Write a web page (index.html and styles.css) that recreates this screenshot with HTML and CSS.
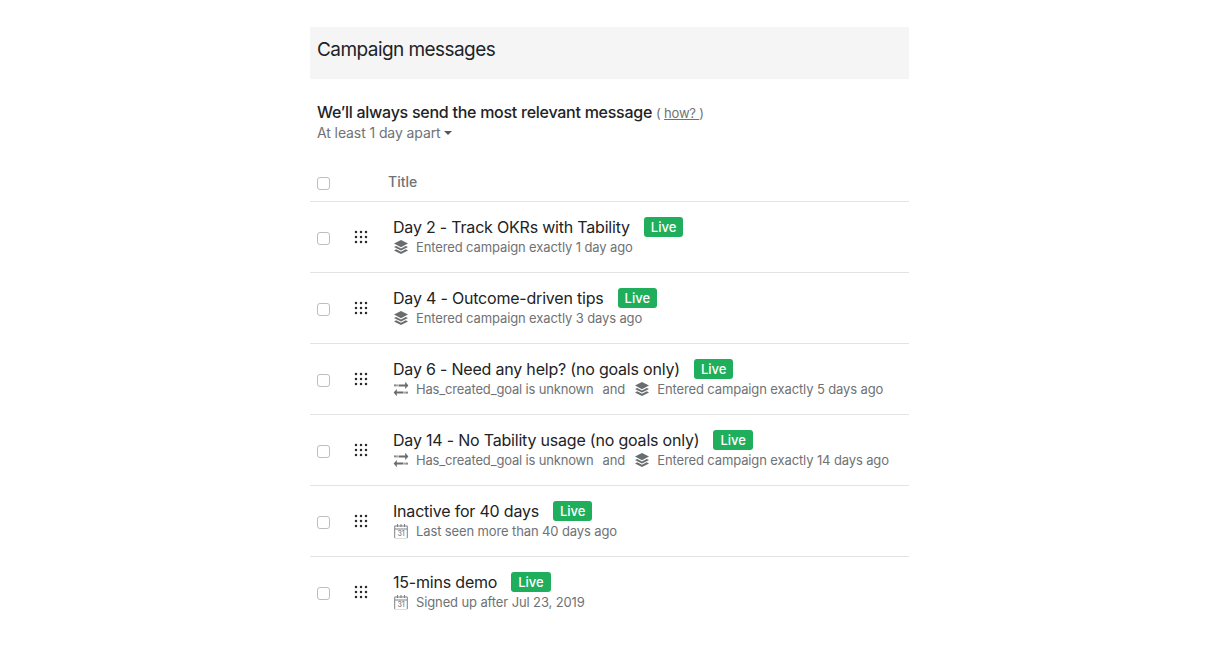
FILE: index.html
```html
<!DOCTYPE html>
<html lang="en">

<head>
      <meta charset="UTF-8">
      <title>Campaign messages</title>
      <link rel="stylesheet" href="styles.css">
</head>

<body>
      <svg class="icon-defs">
            <symbol id="icon-layers" viewBox="0 0 16 16">
                  <path d="M8 1 15 4.6 8 8.2 1 4.6Z" />
                  <path d="M3.2 6.9 1 8 8 11.6 15 8 12.8 6.9 8 9.4Z" />
                  <path d="M3.2 10.3 1 11.4 8 15 15 11.4 12.8 10.3 8 12.8Z" />
            </symbol>
            <symbol id="icon-swap" viewBox="0 0 16 16">
                  <path d="M5.5 3.4h6.7V.8L15.4 4.4 12.2 8V5.4H5.5Z" />
                  <path d="M10.5 12.6H3.8v2.6L.6 11.6 3.8 8v2.6h6.7Z" />
                  <rect x="1.2" y="3.4" width="1.6" height="2" />
                  <rect x="3.4" y="3.4" width="1.2" height="2" />
                  <rect x="13.2" y="10.6" width="1.6" height="2" />
                  <rect x="11.4" y="10.6" width="1.2" height="2" />
            </symbol>
            <symbol id="icon-calendar" viewBox="0 0 16 16">
                  <path d="M2 2.6h12a.8.8 0 0 1 .8.8v11a.8.8 0 0 1-.8.8H2a.8.8 0 0 1-.8-.8v-11a.8.8 0 0 1 .8-.8Zm.2 1v1.9h11.6V3.6Zm0 2.9v8.5h11.6V6.5Z" />
                  <rect x="4" y="1" width="1" height="3" />
                  <rect x="7.5" y="1" width="1" height="3" />
                  <rect x="11" y="1" width="1" height="3" />
            </symbol>
            <symbol id="icon-grip" viewBox="0 0 14 14">
                  <circle cx="2" cy="2" r="1.25" />
                  <circle cx="7" cy="2" r="1.25" />
                  <circle cx="12" cy="2" r="1.25" />
                  <circle cx="2" cy="7" r="1.25" />
                  <circle cx="7" cy="7" r="1.25" />
                  <circle cx="12" cy="7" r="1.25" />
                  <circle cx="2" cy="12" r="1.25" />
                  <circle cx="7" cy="12" r="1.25" />
                  <circle cx="12" cy="12" r="1.25" />
            </symbol>
      </svg>

      <div class="page">
            <div class="page-header">
                  <h1>Campaign messages</h1>
            </div>

            <div class="intro">
                  <div class="intro-title">We’ll always send the most relevant message <span class="how">( <a href="#">how? </a>)</span></div>
                  <div class="intro-sub">At least 1 day apart<span class="caret"></span></div>
            </div>

            <div class="table-head">
                  <span class="check"></span>
                  <span class="head-title">Title</span>
            </div>

            <div class="row">
                  <span class="check"></span>
                  <svg class="grip"><use href="#icon-grip" /></svg>
                  <div class="row-body">
                        <div class="row-title"><span>Day 2 - Track OKRs with Tability</span><span class="badge">Live</span></div>
                        <div class="row-sub">
                              <svg class="icon"><use href="#icon-layers" /></svg><span>Entered campaign exactly 1 day ago</span>
                        </div>
                  </div>
            </div>

            <div class="row">
                  <span class="check"></span>
                  <svg class="grip"><use href="#icon-grip" /></svg>
                  <div class="row-body">
                        <div class="row-title"><span>Day 4 - Outcome-driven tips</span><span class="badge">Live</span></div>
                        <div class="row-sub">
                              <svg class="icon"><use href="#icon-layers" /></svg><span>Entered campaign exactly 3 days ago</span>
                        </div>
                  </div>
            </div>

            <div class="row">
                  <span class="check"></span>
                  <svg class="grip"><use href="#icon-grip" /></svg>
                  <div class="row-body">
                        <div class="row-title"><span>Day 6 - Need any help? (no goals only)</span><span class="badge">Live</span></div>
                        <div class="row-sub">
                              <svg class="icon"><use href="#icon-swap" /></svg><span class="cond">Has_created_goal is unknown</span>
                              <span class="joiner">and</span>
                              <svg class="icon"><use href="#icon-layers" /></svg><span>Entered campaign exactly 5 days ago</span>
                        </div>
                  </div>
            </div>

            <div class="row">
                  <span class="check"></span>
                  <svg class="grip"><use href="#icon-grip" /></svg>
                  <div class="row-body">
                        <div class="row-title"><span>Day 14 - No Tability usage (no goals only)</span><span class="badge">Live</span></div>
                        <div class="row-sub">
                              <svg class="icon"><use href="#icon-swap" /></svg><span class="cond">Has_created_goal is unknown</span>
                              <span class="joiner">and</span>
                              <svg class="icon"><use href="#icon-layers" /></svg><span>Entered campaign exactly 14 days ago</span>
                        </div>
                  </div>
            </div>

            <div class="row">
                  <span class="check"></span>
                  <svg class="grip"><use href="#icon-grip" /></svg>
                  <div class="row-body">
                        <div class="row-title"><span>Inactive for 40 days</span><span class="badge">Live</span></div>
                        <div class="row-sub">
                              <svg class="icon icon-light" viewBox="0 0 16 16"><use href="#icon-calendar" /><text class="cal-day" x="8" y="13.4">31</text></svg><span>Last seen more than 40 days ago</span>
                        </div>
                  </div>
            </div>

            <div class="row">
                  <span class="check"></span>
                  <svg class="grip"><use href="#icon-grip" /></svg>
                  <div class="row-body">
                        <div class="row-title"><span>15-mins demo</span><span class="badge">Live</span></div>
                        <div class="row-sub">
                              <svg class="icon icon-light" viewBox="0 0 16 16"><use href="#icon-calendar" /><text class="cal-day" x="8" y="13.4">31</text></svg><span>Signed up after Jul 23, 2019</span>
                        </div>
                  </div>
            </div>
      </div>
</body>

</html>
```

FILE: styles.css
```css
* {
      padding: 0;
      margin: 0;
      box-sizing: border-box;
}

body {
      background-color: #fff;
      color: #212326;
      font-family: Inter, "Noto Sans", sans-serif;
}

.icon-defs {
      display: none;
}

.page {
      width: 599px;
      margin: 27px 0 0 310px;
}

.page-header {
      height: 52px;
      padding: 0 7px 8px;
      display: flex;
      align-items: center;
      background-color: #f5f5f5;
}

.page-header h1 {
      font-size: 19px;
      font-weight: 400;
      letter-spacing: -0.56px;
}

.intro {
      padding: 23px 7px 0;
}

.intro-title {
      font-size: 16px;
      font-weight: 500;
      line-height: 20px;
      letter-spacing: -0.26px;
}

.how {
      font-size: 13px;
      font-weight: 400;
      letter-spacing: -0.2px;
      color: #6f7275;
}

.how a {
      color: #6f7275;
}

.intro-sub {
      font-size: 14px;
      line-height: 20px;
      letter-spacing: -0.1px;
      color: #6f7275;
      display: flex;
      align-items: center;
}

.caret {
      width: 0;
      height: 0;
      margin-left: 3px;
      border-left: 4px solid transparent;
      border-right: 4px solid transparent;
      border-top: 4px solid #55585b;
}

.check {
      flex: none;
      width: 13px;
      height: 13px;
      margin-top: 2px;
      background-color: #fff;
      border: 1px solid #bcbec0;
      border-radius: 3px;
}

.table-head {
      height: 50px;
      margin-top: 9px;
      padding: 11px 0 0 7px;
      display: flex;
      align-items: center;
      border-bottom: 1px solid #e3e3e3;
}

.head-title {
      margin-left: 58px;
      margin-top: -2px;
      font-size: 14px;
      font-weight: 500;
      color: #707376;
}

.row {
      height: 71px;
      padding: 1px 0 0 7px;
      display: flex;
      align-items: center;
      border-bottom: 1px solid #e3e3e3;
}

.row:last-child {
      border-bottom-color: transparent;
}

.grip {
      flex: none;
      width: 14px;
      height: 14px;
      margin-left: 24px;
      margin-top: -2px;
      fill: #2a2c2f;
}

.row-body {
      margin-left: 25px;
      margin-top: -1px;
}

.row-title {
      display: flex;
      align-items: center;
      font-size: 16px;
      line-height: 20px;
      letter-spacing: -0.2px;
}

.badge {
      margin-left: 14px;
      padding: 0 7px;
      font-size: 13px;
      font-weight: 500;
      line-height: 20px;
      letter-spacing: 0;
      color: #fff;
      background-color: #1fae5b;
      border-radius: 3px;
}

.row-sub {
      display: flex;
      align-items: center;
      font-size: 13px;
      line-height: 20px;
      letter-spacing: -0.12px;
      white-space: nowrap;
      color: #6f7275;
}

.cond {
      letter-spacing: -0.17px;
}

.icon {
      flex: none;
      width: 16px;
      height: 16px;
      margin-right: 7px;
      fill: #6a6d70;
}

.icon-light {
      fill: #7d8083;
}

.cal-day {
      font-size: 7px;
      font-weight: 500;
      text-anchor: middle;
}

.joiner {
      margin: 0 9px 0 9px;
}
```
